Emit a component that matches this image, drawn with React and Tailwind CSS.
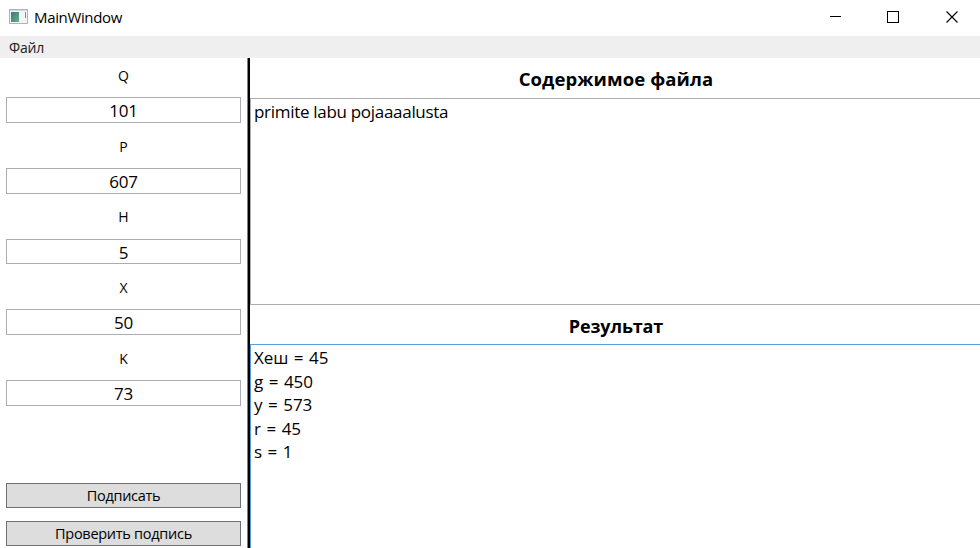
const fields = [
  { label: 'Q', value: '101', labelBox: 'h-[30px]', valueBox: 'h-[26px]' },
  { label: 'P', value: '607', labelBox: 'h-[45px] pt-[15px]', valueBox: 'h-[26px]' },
  { label: 'H', value: '5', labelBox: 'h-[45px] pt-[14px]', valueBox: 'h-[25px]' },
  { label: 'X', value: '50', labelBox: 'h-[45px] pt-[15px]', valueBox: 'h-[26px]' },
  { label: 'K', value: '73', labelBox: 'h-[45px] pt-[15px]', valueBox: 'h-[26px]' },
];

const results = ['Хеш = 45', 'g = 450', 'y = 573', 'r = 45', 's = 1'];

function AppIcon() {
  return (
    <svg width="19" height="16" viewBox="0 0 19 16" shapeRendering="crispEdges">
      <defs>
        <linearGradient id="pane" x1="0" y1="0" x2="1" y2="1">
          <stop offset="0" stopColor="#3d7585" />
          <stop offset="1" stopColor="#63b184" />
        </linearGradient>
      </defs>
      <rect x="0.5" y="0.5" width="18" height="14" fill="#f3f4f5" stroke="#b0b3bb" />
      <path d="M1 1.5h17" stroke="#d5d8dc" />
      <rect x="2" y="3" width="8" height="10" fill="url(#pane)" />
      <rect x="16" y="3" width="1" height="6" fill="#5f9da0" />
    </svg>
  );
}

function TitleBar() {
  return (
    <header className="flex h-9 items-center">
      <div className="mt-[-3px] ml-[9px] w-[19px]"><AppIcon /></div>
      <span className="-mt-0.5 ml-[6px] grow text-[15px] leading-5 tracking-[-0.35px]">MainWindow</span>
      <svg width="150" height="36" viewBox="830 0 150 36" fill="none" stroke="#000" shapeRendering="crispEdges">
        <path d="M829 16.5h12" />
        <rect x="887.5" y="11.5" width="11" height="11" />
        <path d="M946.5 11.5l11 11M957.5 11.5l-11 11" shapeRendering="auto" strokeWidth="1.1" />
      </svg>
    </header>
  );
}

function ActionButton({ children }) {
  return (
    <button className="h-[25px] shrink-0 border border-[#707070] bg-[#dddddd] text-[14.5px] leading-[24px] tracking-[-0.28px]">
      {children}
    </button>
  );
}

export default function App() {
  return (
    <div className="flex h-[548px] w-[980px] flex-col overflow-hidden bg-white font-['Open_Sans','Noto_Sans',sans-serif] text-black">
      <TitleBar />
      <nav className="h-[22px] bg-[#efefef] pl-[9px] text-[14px] leading-[23px] tracking-[-0.2px] text-[#212121]">Файл</nav>
      <main className="flex min-h-0 grow">
        <aside className="flex w-[247px] shrink-0 flex-col px-[6px] pt-[9px] text-center">
          {fields.map((f) => (
            <div key={f.label} className="shrink-0">
              <div className={`text-[14px] leading-[18px] ${f.labelBox}`}>{f.label}</div>
              <div className={`border border-[#abadb3] text-[17px] leading-[25px] tracking-[-0.3px] ${f.valueBox}`}>{f.value}</div>
            </div>
          ))}
          <div className="mt-[77px] flex flex-col gap-[13px]">
            <ActionButton>Подписать</ActionButton>
            <ActionButton>Проверить подпись</ActionButton>
          </div>
        </aside>
        <div className="w-[3px] shrink-0 border-l border-[#808080] bg-black" />
        <section className="flex min-w-0 grow flex-col">
          <h2 className="h-10 shrink-0 pt-px pl-[2px] text-center text-[18.5px] leading-10 font-bold tracking-[0.1px]">Содержимое файла</h2>
          <div className="h-[207px] shrink-0 border-y border-l border-[#abadb3] pl-[3px] text-[17px] leading-[25px] tracking-[-0.3px]">primite labu pojaaaalusta</div>
          <h2 className="h-[39px] shrink-0 pt-px pl-[2px] text-center text-[18px] leading-10 font-bold tracking-[-0.15px]">Результат</h2>
          <div className="grow border-t border-l border-[#569de5] pt-px pl-[3px] text-[17px] leading-[23.5px] tracking-[-0.1px] [word-spacing:1.3px]">
            {results.map((line) => <div key={line}>{line}</div>)}
          </div>
        </section>
      </main>
    </div>
  );
}
